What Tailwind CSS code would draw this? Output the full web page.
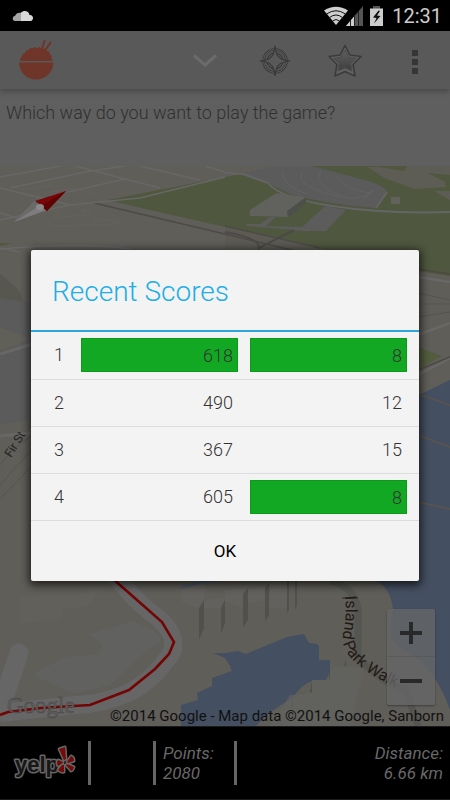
<!DOCTYPE html>
<html lang="en">
<head>
<meta charset="utf-8">
<meta name="viewport" content="width=device-width, initial-scale=1">
<title>Recent Scores</title>
<script src="https://cdn.jsdelivr.net/npm/@tailwindcss/browser@4"></script>
</head>
<body class="bg-black font-[Roboto,sans-serif]">
<div class="relative flex min-h-screen flex-col overflow-hidden">

  <!-- Status bar -->
  <div class="flex h-[31px] shrink-0 items-center bg-black pr-2 pl-3 text-[#cdcdcd]">
    <svg class="h-3 w-[22px]" viewBox="0 0 22 12" aria-label="SoundCloud">
      <path d="M3 11C0 11 0 6 3 6C4 3 7 2 9 3V11Z" fill="#a5a5a5"/>
      <path d="M9 11V2.500C12-.5 17 1 17.500 5C22 4.500 22 11 18.500 11Z" fill="#d8d8d8"/>
    </svg>
    <div class="ml-auto flex items-center">
      <svg class="h-5 w-[62px]" viewBox="0 0 62 20" aria-label="Wi-Fi, signal, charging">
        <path d="M2 4.500Q14-3 26 4.500L14 19Z" fill="#cdcdcd"/>
        <g fill="none" stroke="#111" stroke-width="1"><path d="M4.500 8Q14 1.500 23.500 8"/><path d="M7.500 11.500Q14 6.500 20.500 11.500"/><path d="M10.500 15Q14 12 17.500 15"/></g>
        <path d="M41 0V20H24Z" fill="#555"/>
        <path d="M32 10.600V20H24Z" fill="#cdcdcd"/>
        <path d="M28.500 14V20M32.500 9V20M36.500 5V20" stroke="#222" stroke-width="1"/>
        <path d="M48 2.500H51V0H58V2.500H61V20H48Z" fill="#cdcdcd"/>
        <path d="M48 2.500H51V0H58V2.500Z" fill="#555"/>
        <path d="M56.500 4.500L51 11.500L54.500 12L52 17.500L58.500 10L55 9.500L58 5Z" fill="#111"/>
      </svg>
      <span class="ml-2 text-[20px] leading-6">12:31</span>
    </div>
  </div>

  <!-- Action bar -->
  <header class="z-10 flex h-[58px] shrink-0 items-center bg-[#595959] shadow-[0_2px_6px_rgba(0,0,0,0.28)]">
    <svg class="ml-[18px] h-10 w-9" viewBox="0 0 36 40" aria-label="Rice bowl" fill="#6f3529">
      <path d="M1 22.500H35.500C35 33 27 39.500 18 39.500S1.500 33 1 22.500Z"/>
      <path d="M2 21L2.500 18L4 16.500L4.500 14L7 13L8 10.500L10.500 10L12 8L14.500 8.500L17 7L19 8.300L21.500 7L24 8.500L27 8.500L29 11L31.500 12L32 14.500L33.500 16L33.500 18.500L34.500 19.500L34 21Z"/>
      <path d="M26.500 1L24 9M32.500 2.500L27.500 10" stroke="#6f3529" stroke-width="2" stroke-linecap="round"/>
    </svg>
    <div class="ml-auto flex h-full">
      <button class="flex w-[70px] items-center justify-center" aria-label="Expand">
        <svg class="h-4 w-7" viewBox="0 0 28 16"><path d="M3 3.500L14 13L25 3.500" fill="none" stroke="#6b6b6b" stroke-width="3"/></svg>
      </button>
      <button class="flex w-[70px] items-center justify-center" aria-label="Compass">
        <svg class="h-8 w-8" viewBox="0 0 32 32" fill="none" stroke="#393939">
          <circle cx="16" cy="17" r="11.500" stroke-width="2.600"/><circle cx="16" cy="17" r="11.500" stroke="#606060" stroke-width="1"/>
          <circle cx="16" cy="17" r="8" stroke-width="1.300"/>
          <path d="M16 1.800Q17 11.500 20 13Q21.500 16 31.200 17Q21.500 18 20 21Q17 22.500 16 32Q15 22.500 12 21Q10.500 18 .8 17Q10.500 16 12 13Q15 11.500 16 1.800Z" fill="#595959" stroke-width="1.200"/>
        </svg>
      </button>
      <button class="flex w-[70px] items-center justify-center" aria-label="Favorites">
        <svg class="h-9 w-9" viewBox="0 0 36 36" stroke-linejoin="round">
          <defs><linearGradient id="star" x2="0" y2="1"><stop stop-color="#606060"/><stop offset="1" stop-color="#3d3d3d"/></linearGradient></defs>
          <path d="M18 3.500L22.800 13L34 14.500L26 22.500L28 34L18 29.500L8 34L10 22.500L2 14.500L13.200 13Z" fill="#626262" stroke="#3b3b3b" stroke-width="1.600"/>
          <path d="M18 8L21.800 15L29.500 16.200L23.800 21.500L25 29L18 26L11 29L12.200 21.500L6.500 16.200L14.200 15Z" fill="url(#star)" stroke="#4c4c4c" stroke-width="1"/>
        </svg>
      </button>
      <button class="flex w-[70px] flex-col items-center justify-center gap-[3px] pt-1" aria-label="More options">
        <span class="size-[6px] bg-[#363636]"></span><span class="size-[6px] bg-[#363636]"></span><span class="size-[6px] bg-[#363636]"></span>
      </button>
    </div>
  </header>

  <div class="h-[77px] shrink-0 bg-[#5f5f5f] px-[6px] pt-3">
    <p class="text-[18px] leading-6 font-light text-[#303030]">Which way do you want to play the game?</p>
  </div>

  <!-- Map -->
  <main class="relative min-h-[560px] flex-1 overflow-hidden bg-[#605e59]">
    <svg class="absolute inset-0 h-full w-full" viewBox="0 166 450 560" preserveAspectRatio="xMidYMid slice" aria-hidden="true">
      <rect y="166" width="450" height="560" fill="#605e59"/>
      <!-- Parkland -->
      <path d="M108 200L225 177L290 166H450V276L418 271L320 249Q270 235 225 227L150 210Z" fill="#4f573f"/>
      <path d="M225 227L320 249H225Z" fill="#5c5a53"/>
      <path d="M243 174L275 166H312L372 182Q387 188 387 192L376 208Q330 205 290 194L268 183Z" fill="#5b5b5b"/>
      <path d="M225 173L243 174L268 183Q280 198 332 206T450 212M376 208L387 192" fill="none" stroke="#656565" stroke-width="2"/>
      <g fill="none" stroke="#636363" stroke-width="1"><path d="M283 171Q281 186 308 194"/><path d="M302 172Q295 187 340 197"/><path d="M321 171Q310 187 352 199Q366 197 372 191"/><path d="M337 176Q343 189 370 193M360 203L374 190"/></g>
      <path d="M368 167L379 167L404 171L407 166H450V175L428 173L445 182L446 187L415 189L384 178Z M434 191H450V200Z" fill="#5e5d55"/>
      <path d="M250 210L276 193L306 197L290 217L250 216Z" fill="#61625d"/><path d="M287 211L306 197V203L288 218Z" fill="#4d4f4b"/>
      <path d="M246 224H260L270 217H276L266 226L302 227L325 206L346 210L326 231L304 231L247 226Z" fill="#5b5c5b"/>
      <path d="M391 197H400V204H391Z" fill="#62625c"/>
      <path d="M94 203L225 234L300 252M225 226L320 248" fill="none" stroke="#4c4b48" stroke-width="1.500"/>
      <path d="M225 232Q260 238 259 248L294 230" fill="none" stroke="#4b4a46" stroke-width="2"/>
      <!-- Streets -->
      <g fill="none" stroke="#676766" stroke-width="1.500">
        <path d="M0 177L60 166M10 188L85 172L124 166M75 166L160 188M140 166L200 180M0 188L70 205L140 198L225 177M0 220L70 205M50 196L125 179M0 213L20 219M205 166L225 172M0 249Q80 242 130 249M0 248L20 252"/>
        <path d="M20 190L55 185M50 192L75 188L98 195M60 217L86 215L82 210L90 210L94 219L120 221Q120 225 91 225L52 226Q44 222 60 217" opacity=".35"/>
      </g>
      <path d="M0 243L12 243L0 246Z" fill="#4f5b3c"/>
      <path d="M0 274Q45 306 0 315Z" fill="#57574f"/><path d="M0 298L32 303V420L0 424Z" fill="#5b5b5b"/>
      <path d="M0 327L32 339L0 351Z" fill="#605f58"/>
      <path d="M0 354L32 344M0 436L32 433" stroke="#676766" stroke-width="3"/>
      <path d="M0 485L32 449M0 499L32 466M32 436Q15 445 0 465" fill="none" stroke="#555450" stroke-width="1"/>
      <!-- Right side waterfront -->
      <path d="M418 277L450 282M418 335L450 323M418 375L450 358" stroke="#686866" stroke-width="2.500"/>
      <path d="M418 304H450M418 293L450 300M418 317L450 312" stroke="#55544f" stroke-width="1"/>
      <path d="M418 347L442 356L418 369Z" fill="#535c3f"/><path d="M418 370L450 357M418 269L450 274" stroke="#4d4942" stroke-width="1.500"/>
      <path d="M450 380L419 395V581H375Q390 586 393 609Q389 630 392 640Q400 650 420 660Q440 680 450 710Z" fill="#444f61"/>
      <path d="M418 394L450 405M418 435L450 447M418 502L450 509" stroke="#5d554b" stroke-width="1.500"/>
      <!-- Lagoon -->
      <path d="M213 653L225 653L238 651L246 654Q270 644 287 637L304 634L309 643L317 644L319 646V660H330V672L326 680L314 680Q300 685 293 698Q270 710 256 726H181L181 705L198 700L197 693L212 686L212 678L232 671L230 666L225 658Z" fill="#444f61"/>
      <path d="M180 589L182 585L208 580H225Z" fill="#515a66"/>
      <!-- Blocks and buildings -->
      <path d="M90 634L132 621L155 631L162 641L145 652L110 685L75 694L34 676L35 672L66 657L100 654L102 644Z" fill="#626262" opacity=".7"/>
      <path d="M0 627L20 625V598L47 595H77L98 590L91 605L63 610L62 618L20 624Z" fill="#63625e" opacity=".6"/>
      <g fill="#666460"><path d="M181 590L205 582L204 602L199 608L182 602ZM204 600L225 598L221 608H204ZM225 590L248 589L243 608L225 601ZM248 590L269 585L265 600L248 603ZM270 582H289L286 608H269Z" opacity=".6"/></g>
      <g fill="#50504c"><path d="M199 608L204 600V628L199 640ZM221 608L225 600V623L221 634ZM243 594L248 588V620L243 627ZM265 588L269 583V615L265 621ZM287 581H289V610L287 613ZM295 581H297V606L295 609ZM329 677L330 667V680ZM310 692L312 680V693ZM292 707V696L294 706ZM344 665L346 659V667Z"/></g>
      <path d="M335 667H365L350 726H270L290 695L312 693V680H330V670Z" fill="#63625f" opacity=".7"/>
      <path d="M330 581Q353 586 358 608V658Q385 685 406 690L418 726" fill="none" stroke="#555652" stroke-width="7"/>
      <path d="M342 598H358" stroke="#302b26" stroke-width="1"/>
      <!-- Route -->
      <path d="M19 653L0 710" stroke="#666" stroke-width="19" stroke-linecap="round"/>
      <path d="M112 570Q130 598 157 617Q178 635 172 652Q153 681 128 693Q103 704 75 705L0 713" fill="none" stroke="#676666" stroke-width="18"/>
      <path d="M112 578L137 600L162 622L174 642L169 654L155 669L129 690L90 705L41 708L8 712L0 715" fill="none" stroke="#730505" stroke-width="2.600"/>
      <!-- North marker -->
      <path d="M14 222L35 201L38 207L47 210Z" fill="#7c7c7c"/><path d="M14 222L35 201L39 206Z" fill="#6a6a6a"/>
      <path d="M35 201L66 191L47 211L41 205Z" fill="#780707"/><path d="M66 191L41 206L47 211Z" fill="#5f0303"/><ellipse cx="40" cy="207" rx="4" ry="3" fill="#8b8b8b"/>
      <!-- Street labels -->
      <path id="park" d="M345 596Q347 616 343 634Q341 650 356 663Q378 682 416 695" fill="none"/>
      <text font-size="16" fill="#211a14"><textPath href="#park">Island Park Walk</textPath></text>
      <text transform="translate(11 458) rotate(-58)" font-size="12" fill="#222">Fir St</text>
      <text x="7" y="713" font-size="23" font-family="Liberation Serif, serif" fill="#5f5f5d" stroke="#454543" stroke-width=".5">Google</text>
    </svg>
    <small class="absolute right-[6px] bottom-0 text-[15px] leading-5 whitespace-nowrap text-[#111]">©2014 Google - Map data ©2014 Google, Sanborn</small>
    <div class="absolute right-[15px] bottom-[21px] flex w-12 flex-col divide-y divide-[#555]/70 rounded-[2px] bg-[#656567]/80 shadow-[0_1px_2px_rgba(0,0,0,0.35)]">
      <button class="flex h-12 items-center justify-center" aria-label="Zoom in"><svg class="size-[22px]" viewBox="0 0 22 22"><path d="M0 11H22M11 0V22" stroke="#292929" stroke-width="4"/></svg></button>
      <button class="flex h-12 items-center justify-center" aria-label="Zoom out"><svg class="size-[22px]" viewBox="0 0 22 22"><path d="M0 11H22" stroke="#292929" stroke-width="4"/></svg></button>
    </div>
  </main>

  <!-- Game status -->
  <footer class="flex h-[74px] shrink-0 items-center border-y border-[#1c1c1c] bg-black text-[17px] leading-5 text-[#686868] italic">
    <div class="w-[88px] pl-3">
      <svg class="h-10 w-[68px]" viewBox="0 0 68 40" aria-label="Yelp">
        <text x="3" y="29" font-family="Liberation Sans, sans-serif" font-size="22" font-weight="bold" font-style="normal" fill="#171717" stroke="#666" stroke-width="3" stroke-linejoin="round" paint-order="stroke">yelp</text>
        <g fill="#750b08" stroke="#666" stroke-width="3" stroke-linejoin="round" paint-order="stroke">
          <path d="M47 6L53 4L54 16L52 17Z"/><path d="M46 17L51 19L50 21L46 23Q44 20 46 17Z"/><path d="M52 22V29Q49 30 46 27L50 22Z"/><path d="M55 21L62 24Q61 28 59 28L54 22Z"/><path d="M55 19L59 13Q62 14 62 18L56 20Z"/>
        </g>
      </svg>
    </div>
    <div class="h-11 w-[65px] border-l-[3px] border-[#666]"></div>
    <div class="flex h-11 w-[81px] items-center border-l-[3px] border-[#666] pl-[7px]"><p>Points:<br>2080</p></div>
    <div class="flex h-11 flex-1 items-center justify-end border-l-[3px] border-[#666] pr-[7px] text-right"><p>Distance:<br>6.66 km</p></div>
  </footer>

  <!-- Scores dialog -->
  <div class="absolute inset-x-0 top-[31px] bottom-0 z-20 flex items-center px-[31px]">
    <section role="dialog" aria-labelledby="title" class="w-full rounded-[2px] bg-[#f3f3f3] shadow-[0_2px_8px_2px_rgba(0,0,0,0.7)]">
      <h1 id="title" class="flex h-[82px] items-center border-b-2 border-[#2ba6da] px-[21px] pt-1 text-[28px] leading-8 font-light text-[#21aee6]">Recent Scores</h1>
      <table class="w-full table-fixed border-collapse text-[18px] leading-6 font-light text-[#333]">
        <colgroup><col class="w-[50px]"><col><col></colgroup>
        <tbody class="divide-y divide-[#dcdcdc]">
          <tr class="h-[47px]"><td class="p-0 pl-[23px]">1</td><td class="p-0 pr-3 text-right"><div class="border border-[#0a9c18] bg-[#13a823] pt-[5px] pr-1 pb-[3px]">618</div></td><td class="p-0 pr-3 text-right"><div class="border border-[#0a9c18] bg-[#13a823] pt-[5px] pr-1 pb-[3px]">8</div></td></tr>
          <tr class="h-[47px]"><td class="p-0 pl-[23px]">2</td><td class="p-0 pr-[17px] text-right">490</td><td class="p-0 pr-[17px] text-right">12</td></tr>
          <tr class="h-[47px]"><td class="p-0 pl-[23px]">3</td><td class="p-0 pr-[17px] text-right">367</td><td class="p-0 pr-[17px] text-right">15</td></tr>
          <tr class="h-[47px]"><td class="p-0 pl-[23px]">4</td><td class="p-0 pr-[17px] text-right">605</td><td class="p-0 pr-3 text-right"><div class="border border-[#0a9c18] bg-[#13a823] pt-[5px] pr-1 pb-[3px]">8</div></td></tr>
        </tbody>
      </table>
      <button class="block h-[61px] w-full border-t border-[#dcdcdc] text-[17px] leading-6 text-black">OK</button>
    </section>
  </div>
</div>
</body>
</html>
